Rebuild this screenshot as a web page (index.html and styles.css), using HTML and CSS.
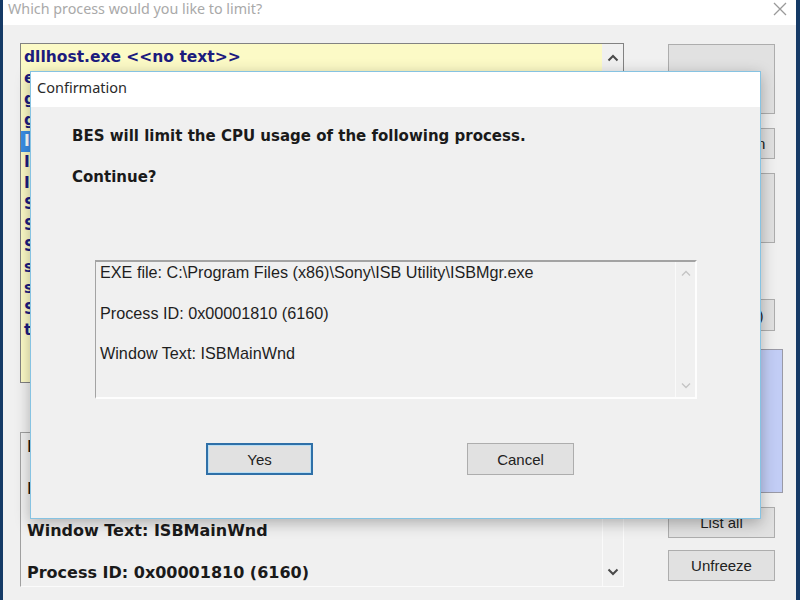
FILE: index.html
```html
<!DOCTYPE html>
<html>
<head>
<meta charset="utf-8">
<link rel="stylesheet" href="styles.css">
</head>
<body>
<div class="window">
  <div class="titlebar">
    <span class="title">Which process would you like to limit?</span>
    <svg class="close" width="14" height="14" viewBox="0 0 14 14"><path d="M1 1L13 13M13 1L1 13" stroke="#9a9a9a" stroke-width="1.3" fill="none"/></svg>
  </div>
  <div class="main">
    <div class="left">
      <div class="list">
        <div class="items">
          <div class="item">dllhost.exe &lt;&lt;no text&gt;&gt;</div>
          <div class="item">explorer.exe &lt;&lt;no text&gt;&gt;</div>
          <div class="item">googledrivesync.exe &lt;&lt;no text&gt;&gt;</div>
          <div class="item">googleupdate.exe &lt;&lt;no text&gt;&gt;</div>
          <div class="item sel">ISBMgr.exe ISBMainWnd</div>
          <div class="item">IAStorIcon.exe &lt;&lt;no text&gt;&gt;</div>
          <div class="item">IntelCpHeciSvc.exe &lt;&lt;no text&gt;&gt;</div>
          <div class="item">SearchUI.exe Cortana</div>
          <div class="item">ShellExperienceHost.exe &lt;&lt;no text&gt;&gt;</div>
          <div class="item">SkypeHost.exe &lt;&lt;no text&gt;&gt;</div>
          <div class="item">sihost.exe &lt;&lt;no text&gt;&gt;</div>
          <div class="item">svchost.exe &lt;&lt;no text&gt;&gt;</div>
          <div class="item">SettingSyncHost.exe &lt;&lt;no text&gt;&gt;</div>
          <div class="item">taskhostw.exe &lt;&lt;no text&gt;&gt;</div>
        </div>
        <div class="vscroll">
          <svg class="chev" width="12" height="8" viewBox="0 0 12 8"><path d="M1.5 6.5L6 2L10.5 6.5" stroke="#4a4a4a" stroke-width="2" fill="none"/></svg>
        </div>
      </div>
      <div class="details">
        <div class="dtext">
          <div class="dline">EXE file: C:\Program Files (x86)\Sony\ISB Utility\ISBMgr.exe</div>
          <div class="dline">Image: ISBMgr.exe</div>
          <div class="dline">Window Text: ISBMainWnd</div>
          <div class="dline">Process ID: 0x00001810 (6160)</div>
        </div>
        <div class="vscroll bottom">
          <svg class="chev" width="12" height="8" viewBox="0 0 12 8"><path d="M1.5 1.5L6 6L10.5 1.5" stroke="#4a4a4a" stroke-width="2" fill="none"/></svg>
        </div>
      </div>
    </div>
    <div class="right">
      <div class="btn tall b1">Limit this</div>
      <div class="btn b2">Watch &amp; Run</div>
      <div class="btn tall b3">Watch this</div>
      <div class="btn b4">Refresh (F5)</div>
      <div class="panel"></div>
      <div class="btn b5">List all</div>
      <div class="btn b6">Unfreeze</div>
    </div>
  </div>
</div>

<div class="dialog">
  <div class="dtitle">Confirmation</div>
  <div class="dbody">
    <div class="msg">BES will limit the CPU usage of the following process.</div>
    <div class="msg">Continue?</div>
    <div class="infobox">
      <div class="infotext">
        <div class="iline">EXE file: C:\Program Files (x86)\Sony\ISB Utility\ISBMgr.exe</div>
        <div class="iline">Process ID: 0x00001810 (6160)</div>
        <div class="iline">Window Text: ISBMainWnd</div>
      </div>
      <div class="iscroll">
        <svg width="10" height="7" viewBox="0 0 10 7"><path d="M1 5.5L5 1.5L9 5.5" stroke="#c4c4c4" stroke-width="1.3" fill="none"/></svg>
        <svg width="10" height="7" viewBox="0 0 10 7"><path d="M1 1.5L5 5.5L9 1.5" stroke="#c4c4c4" stroke-width="1.3" fill="none"/></svg>
      </div>
    </div>
    <div class="buttons">
      <div class="dbtn yes">Yes</div>
      <div class="dbtn">Cancel</div>
    </div>
  </div>
</div>
</body>
</html>
```

FILE: styles.css
```css
* { box-sizing: border-box; }

body {
  margin: 0;
  width: 800px;
  height: 600px;
  overflow: hidden;
  position: relative;
  background: #153a66;
  font-family: "Liberation Sans", Arial, sans-serif;
}

.window {
  margin-left: 3px;
  width: 793px;
  height: 600px;
  background: #f0f0f0;
  display: flex;
  flex-direction: column;
}

.titlebar {
  height: 25px;
  background: #ffffff;
  display: flex;
  align-items: flex-start;
  justify-content: space-between;
  padding: 0 9px 0 5px;
}

.title {
  font-family: "Noto Sans", sans-serif;
  font-size: 14.3px;
  line-height: 18px;
  color: #a9a9a9;
  padding-top: 0;
}

.close { margin-top: 2px; }

.main {
  display: flex;
  padding: 18px 0 0 17px;
  gap: 44px;
}

.left {
  width: 604px;
  display: flex;
  flex-direction: column;
  gap: 49px;
}

.list {
  height: 340px;
  border: 1px solid #828282;
  display: flex;
  background: #fcfac6;
}

.items {
  flex: 1;
  padding-top: 2.5px;
  font-family: "DejaVu Sans", sans-serif;
  font-weight: bold;
  font-size: 15.5px;
  color: #1c1c7e;
  overflow: hidden;
}

.item {
  height: 21px;
  line-height: 21px;
  padding-left: 3px;
  white-space: nowrap;
}

.item.sel {
  background: #3a8ee6;
  color: #ffffff;
}

.vscroll {
  width: 21px;
  background: #f0f0f0;
  display: flex;
  flex-direction: column;
  align-items: center;
  padding-top: 10px;
}

.vscroll.bottom {
  justify-content: flex-end;
  padding: 0 0 10px 0;
  border-left: 1px solid #fafafa;
}

.details {
  height: 155px;
  border-top: 1px solid #a0a0a0;
  border-left: 1px solid #a0a0a0;
  border-right: 1px solid #fbfbfb;
  border-bottom: 1px solid #fbfbfb;
  display: flex;
  background: #f0f0f0;
}

.dtext {
  flex: 1;
  padding: 3px 0 0 6px;
  font-family: "DejaVu Sans", sans-serif;
  font-weight: bold;
  font-size: 16px;
  color: #1a1a1a;
  display: flex;
  flex-direction: column;
  gap: 21px;
  overflow: hidden;
  white-space: nowrap;
}

.dline { height: 21px; line-height: 21px; }

.right {
  width: 107px;
  display: flex;
  flex-direction: column;
  padding-top: 1px;
}

.btn {
  height: 31px;
  background: #e1e1e1;
  border: 1px solid #adadad;
  display: flex;
  align-items: center;
  justify-content: center;
  font-size: 15px;
  color: #222;
  white-space: nowrap;
}

.btn.tall { height: 70px; }
.b2 { margin-top: 14px; }
.b3 { margin-top: 14px; }
.b4 { margin-top: 56px; height: 32px; }

.panel {
  margin-top: 18px;
  width: 115px;
  height: 144px;
  background: #c2cdf5;
  border: 1px solid #9a9aa6;
}

.b5 { margin-top: 14px; }
.b6 { margin-top: 12px; }

/* Dialog overlay */
.dialog {
  position: absolute;
  left: 30px;
  top: 71px;
  width: 731px;
  height: 448px;
  background: #f0f0f0;
  border: 1px solid #86c3e2;
  box-shadow: 0 4px 14px rgba(0, 0, 0, 0.28);
  display: flex;
  flex-direction: column;
}

.dtitle {
  height: 35px;
  background: #ffffff;
  padding: 6px 0 0 6px;
  font-family: "Noto Sans", sans-serif;
  font-size: 14.5px;
  line-height: 19px;
  color: #2a2a2a;
}

.dbody {
  padding: 19px 0 0 41px;
  display: flex;
  flex-direction: column;
}

.msg {
  font-family: "DejaVu Sans", sans-serif;
  font-weight: bold;
  font-size: 15px;
  line-height: 20px;
  height: 20px;
  color: #1a1a1a;
  margin-bottom: 21px;
}

.infobox {
  margin: 52px 0 0 23px;
  width: 602px;
  height: 139px;
  border-top: 2px solid #a3a3a3;
  border-left: 1px solid #a3a3a3;
  border-right: 2px solid #fdfdfd;
  border-bottom: 2px solid #fdfdfd;
  display: flex;
}

.infotext {
  flex: 1;
  padding: 0 0 0 4px;
  font-size: 16.2px;
  color: #1e1e1e;
  display: flex;
  flex-direction: column;
  gap: 20.5px;
}

.iline { height: 20px; line-height: 20px; white-space: nowrap; }

.iscroll {
  width: 20px;
  border-left: 1px solid #fafafa;
  display: flex;
  flex-direction: column;
  justify-content: space-between;
  align-items: center;
  padding: 8px 0 8px 0;
}

.buttons {
  margin: 44px 0 0 134px;
  display: flex;
  gap: 154px;
}

.dbtn {
  width: 107px;
  height: 32px;
  background: #e1e1e1;
  border: 1px solid #adadad;
  display: flex;
  align-items: center;
  justify-content: center;
  font-size: 15px;
  color: #222;
}

.dbtn.yes {
  border: 2px solid #2f70a8;
  box-shadow: inset 0 0 0 1px #b9def3;
}
```
